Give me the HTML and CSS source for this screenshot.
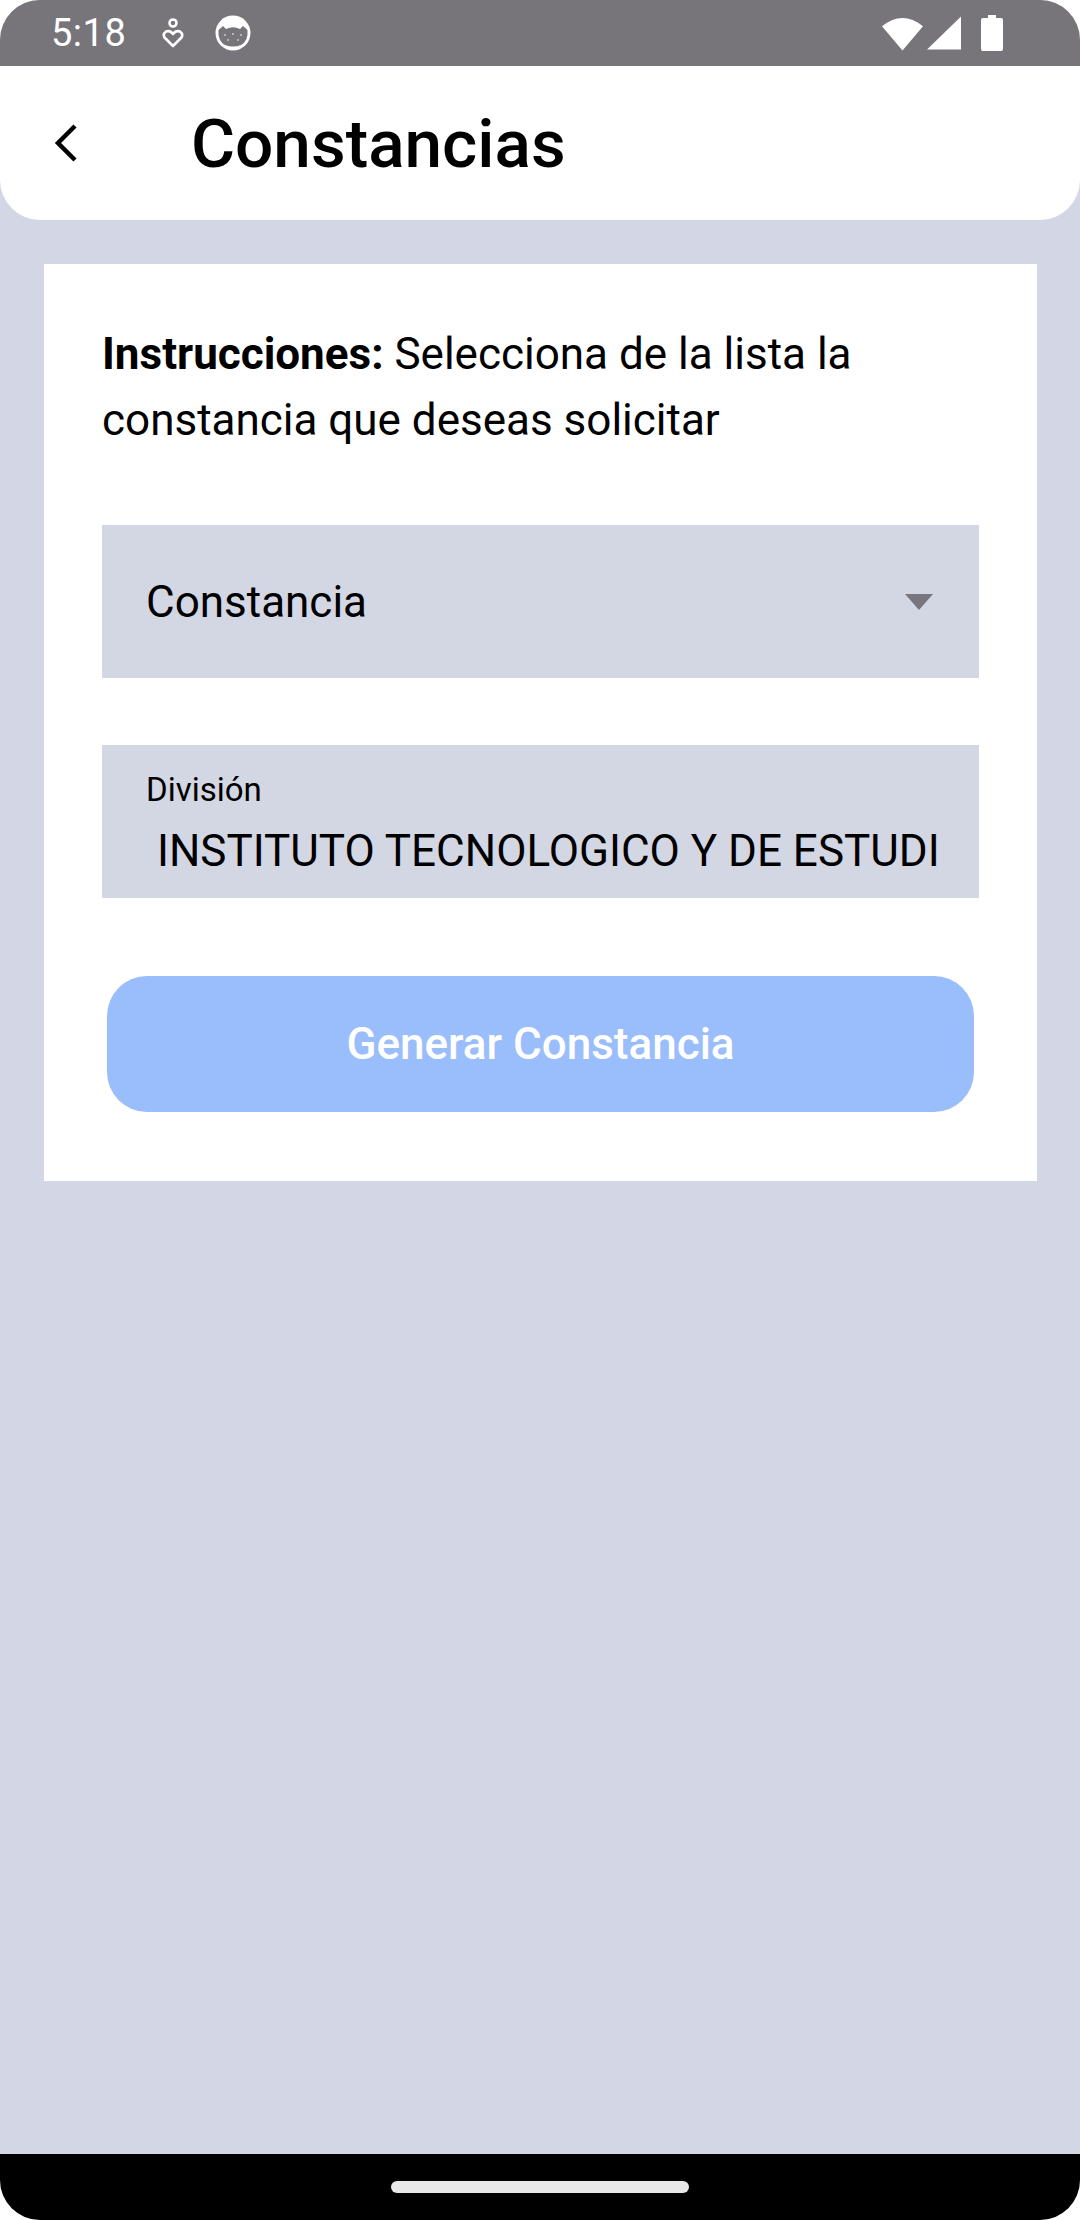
FILE: index.html
```html
<!DOCTYPE html>
<html>
<head>
    <title>Constancias</title>
    <link rel="stylesheet" href="styles.css">
</head>
<body>
    <div class="screen">
        <div class="status-bar">
            <span class="clock">5:18</span>
            <svg class="status-icon" width="22" height="30" viewBox="0 0 22 30">
                <circle cx="11" cy="5" r="3.5" fill="none" stroke="#fff" stroke-width="2.6"/>
                <path d="M11 28 L2.5 19.5 Q0.5 16 4 13.5 Q8 12 11 16 Q14 12 18 13.5 Q21.5 16 19.5 19.5 Z" fill="none" stroke="#fff" stroke-width="2.6" stroke-linejoin="round"/>
            </svg>
            <svg class="status-icon cat" width="36" height="36" viewBox="0 0 36 36">
                <circle cx="18" cy="18" r="17.5" fill="#fff"/>
                <path d="M3.5 15 L8 11 L11 14 Q18 10.5 25 14 L28 11 L32.5 15 Q33.5 26 26 30 Q18 33 10 30 Q2.5 26 3.5 15 Z" fill="#77757a"/>
                <circle cx="10" cy="20" r="1" fill="#c8c8ca"/>
                <circle cx="18" cy="19" r="1" fill="#c8c8ca"/>
                <circle cx="26" cy="20" r="1" fill="#c8c8ca"/>
                <circle cx="13" cy="25" r="1" fill="#c8c8ca"/>
                <circle cx="23" cy="25" r="1" fill="#c8c8ca"/>
            </svg>
            <div class="status-right">
                <svg width="41" height="35" viewBox="0 0 42 35"><path d="M0 10 Q21 -7 42 10 L21 35 Z" fill="#fff"/></svg>
                <svg width="34" height="34" viewBox="0 0 35 34"><path d="M35 0 V34 H0 Z" fill="#fff"/></svg>
                <svg class="battery" width="22" height="36" viewBox="0 0 22 36"><path d="M7 0 H15 V3 H20 Q22 3 22 5 V34 Q22 36 20 36 H2 Q0 36 0 34 V5 Q0 3 2 3 H7 Z" fill="#fff"/></svg>
            </div>
        </div>

        <header class="app-bar">
            <svg class="back" width="24" height="38" viewBox="0 0 24 38">
                <path d="M21 2 L4 19 L21 36" fill="none" stroke="#000" stroke-width="4.5"/>
            </svg>
            <h1>Constancias</h1>
        </header>

        <main class="content">
            <section class="card">
                <p class="instructions"><b>Instrucciones:</b> Selecciona de la lista la constancia que deseas solicitar</p>

                <div class="select-box">
                    <span>Constancia</span>
                    <i class="arrow"></i>
                </div>

                <div class="input-box">
                    <label>División</label>
                    <div class="input-value">INSTITUTO TECNOLOGICO Y DE ESTUDI</div>
                </div>

                <button class="generate" type="button">Generar Constancia</button>
            </section>
        </main>

        <div class="nav-bar"><span class="home-pill"></span></div>
    </div>
</body>
</html>
```

FILE: styles.css
```css
html, body { margin: 0; padding: 0; background: #fff; }
body { font-family: Roboto, "Liberation Sans", sans-serif; color: #000; }

.screen { width: 1080px; height: 2220px; display: flex; flex-direction: column; border-radius: 40px; overflow: hidden; background: #d3d6e5; }

.status-bar { height: 66px; flex: none; display: flex; align-items: center; padding: 0 77px 0 51px; box-sizing: border-box; background: #77757a; color: #fff; }
.clock { font-size: 38px; letter-spacing: 0.5px; margin-right: 36px; }
.status-icon { display: block; }
.status-icon.cat { margin-left: 31px; }
.status-right { margin-left: auto; display: flex; align-items: center; gap: 4px; }
.status-right .battery { margin-left: 16px; }

.app-bar { height: 154px; flex: none; display: flex; align-items: center; background: #fff; border-radius: 0 0 40px 40px; padding-left: 54px; box-sizing: border-box; }
.back { flex: none; display: block; }
.app-bar h1 { margin: 0 0 0 113px; font-size: 67.5px; font-weight: 500; }

.content { flex: 1; padding: 44px 43px 0 44px; }
.card { background: #fff; padding: 57px 58px 69px; height: 917px; box-sizing: border-box; }

.instructions { margin: 0; font-size: 44px; line-height: 66px; }
.instructions b { font-weight: 700; }

.select-box { height: 153px; margin-top: 72px; padding: 0 46px 0 44px; display: flex; align-items: center; justify-content: space-between; background: #d3d6e3; font-size: 44px; box-sizing: border-box; }
.arrow { width: 0; height: 0; border-left: 14px solid transparent; border-right: 14px solid transparent; border-top: 16px solid #77767e; }

.input-box { height: 153px; margin-top: 67px; padding: 26px 40px 0 44px; background: #d3d6e3; box-sizing: border-box; }
.input-box label { display: block; font-size: 33px; line-height: 38px; }
.input-value { margin: 16px 0 0 11px; font-size: 44px; line-height: 52px; white-space: nowrap; overflow: hidden; }

.generate { display: block; width: 867px; height: 136px; margin: 78px 0 0 5px; border: 0; border-radius: 40px; background: #9abdfc; color: #fff; font-family: inherit; font-size: 44px; font-weight: 500; }

.nav-bar { height: 66px; flex: none; display: flex; justify-content: center; align-items: flex-start; background: #000; }
.home-pill { width: 298px; height: 12px; margin-top: 27px; border-radius: 6px; background: #e8e8e8; }
```
